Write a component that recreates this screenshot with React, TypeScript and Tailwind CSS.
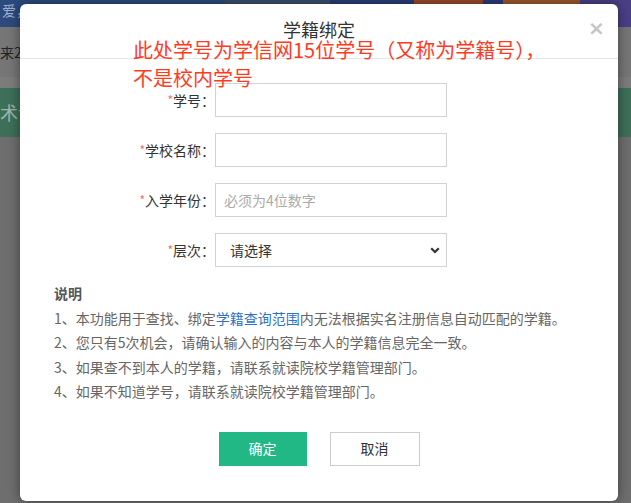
import React from "react";

const font = { fontFamily: '"Noto Sans CJK SC", "Noto Sans", sans-serif' };

function Row({ label, children }: { label: string; children: React.ReactNode }) {
  return (
    <div className="flex items-center h-[34px]">
      <div className="w-[195px] text-right text-[14px] text-[#333] leading-[34px] whitespace-nowrap">
        <span className="text-[#f56c6c] text-[12px] align-top">*</span>
        {label}：
      </div>
      {children}
    </div>
  );
}

export default function App() {
  return (
    <div className="relative w-[631px] h-[503px] overflow-hidden bg-[#6e6e6e]" style={font}>
      {/* background page (dimmed) */}
      <div className="flex flex-col w-full">
        <div className="h-[27px] flex bg-[#2c4a7e]">
          <div className="w-[225px] text-[#9db0d0] text-[14px] leading-[20px] pl-[2px]">爱，</div>
          <div className="w-[105px] bg-[#3a4f6e]" />
          <div className="w-[84px] bg-[#2a3f78]" />
          <div className="w-[69px] bg-[#9a4a2c]" />
          <div className="w-[20px] bg-[#2b3c7a]" />
          <div className="w-[77px] bg-[#9b5a2a]" />
          <div className="flex-1 bg-[#4a3f86]" />
        </div>
        <div className="h-[50px] bg-[#767676] flex items-center">
          <span className="text-[14px] text-[#222] -ml-[4px]">l来2</span>
        </div>
        <div className="h-[11px] bg-[#7c7c7c]" />
        <div className="h-[49px] bg-[#3e6f59] flex items-center">
          <span className="text-[18px] text-[#9fb7aa]">术语</span>
        </div>
        <div className="flex-1 bg-[#6f6f6f]" />
      </div>

      {/* modal */}
      <div className="absolute left-[20px] top-[4px] w-[598px] h-[497px] bg-white rounded-[6px] shadow-[0_0_12px_rgba(0,0,0,0.45)]">
        <div className="h-[55px] border-b border-[#e5e5e5] flex items-center justify-center pb-[3px]">
          <span className="text-[18px] text-[#333]">学籍绑定</span>
        </div>
        <div className="absolute left-[568px] top-[14px] text-[20px] leading-[20px] font-bold text-[#c4c4c4]" style={{ fontFamily: '"DejaVu Sans", sans-serif' }}>
          ×
        </div>

        {/* annotation */}
        <div className="absolute left-[113px] top-[32px] text-[20px] leading-[28px] text-[#ff3a1f] whitespace-nowrap">
          此处学号为学信网15位学号（又称为学籍号），
          <br />
          不是校内学号
        </div>

        <div className="mt-[24px] flex flex-col gap-[16px]">
          <Row label="学号">
            <input className="w-[232px] h-[34px] border border-[#d2d2d2] outline-none px-[8px] text-[14px]" />
          </Row>
          <Row label="学校名称">
            <input className="w-[232px] h-[34px] border border-[#d2d2d2] outline-none px-[8px] text-[14px]" />
          </Row>
          <Row label="入学年份">
            <input
              className="w-[232px] h-[34px] border border-[#d2d2d2] outline-none px-[8px] text-[14px] placeholder:text-[#aaa]"
              placeholder="必须为4位数字"
            />
          </Row>
          <Row label="层次">
            <div className="relative w-[232px] h-[34px] border border-[#d2d2d2] flex items-center pl-[14px] text-[14px] text-[#333]">
              请选择
              <svg className="absolute right-[6px] top-[13px]" width="10" height="7" viewBox="0 0 10 7">
                <path d="M1.2 1.2 L5 5 L8.8 1.2" fill="none" stroke="#333" strokeWidth="2.2" />
              </svg>
            </div>
          </Row>
        </div>

        <div className="mt-[14px] pl-[34px] text-[14px] leading-[24.5px] text-[#666]">
          <div className="font-bold text-[#555]">说明</div>
          <div>
            1、本功能用于查找、绑定<span className="text-[#2b73c6]">学籍查询范围</span>内无法根据实名注册信息自动匹配的学籍。
          </div>
          <div>2、您只有5次机会，请确认输入的内容与本人的学籍信息完全一致。</div>
          <div>3、如果查不到本人的学籍，请联系就读院校学籍管理部门。</div>
          <div>4、如果不知道学号，请联系就读院校学籍管理部门。</div>
        </div>

        <div className="mt-[28px] flex justify-center gap-[23px]">
          <div className="w-[88px] h-[34px] bg-[#22b886] text-white text-[14px] flex items-center justify-center">确定</div>
          <div className="w-[90px] h-[34px] border border-[#cccccc] text-[#333] text-[14px] flex items-center justify-center">取消</div>
        </div>
      </div>
    </div>
  );
}
